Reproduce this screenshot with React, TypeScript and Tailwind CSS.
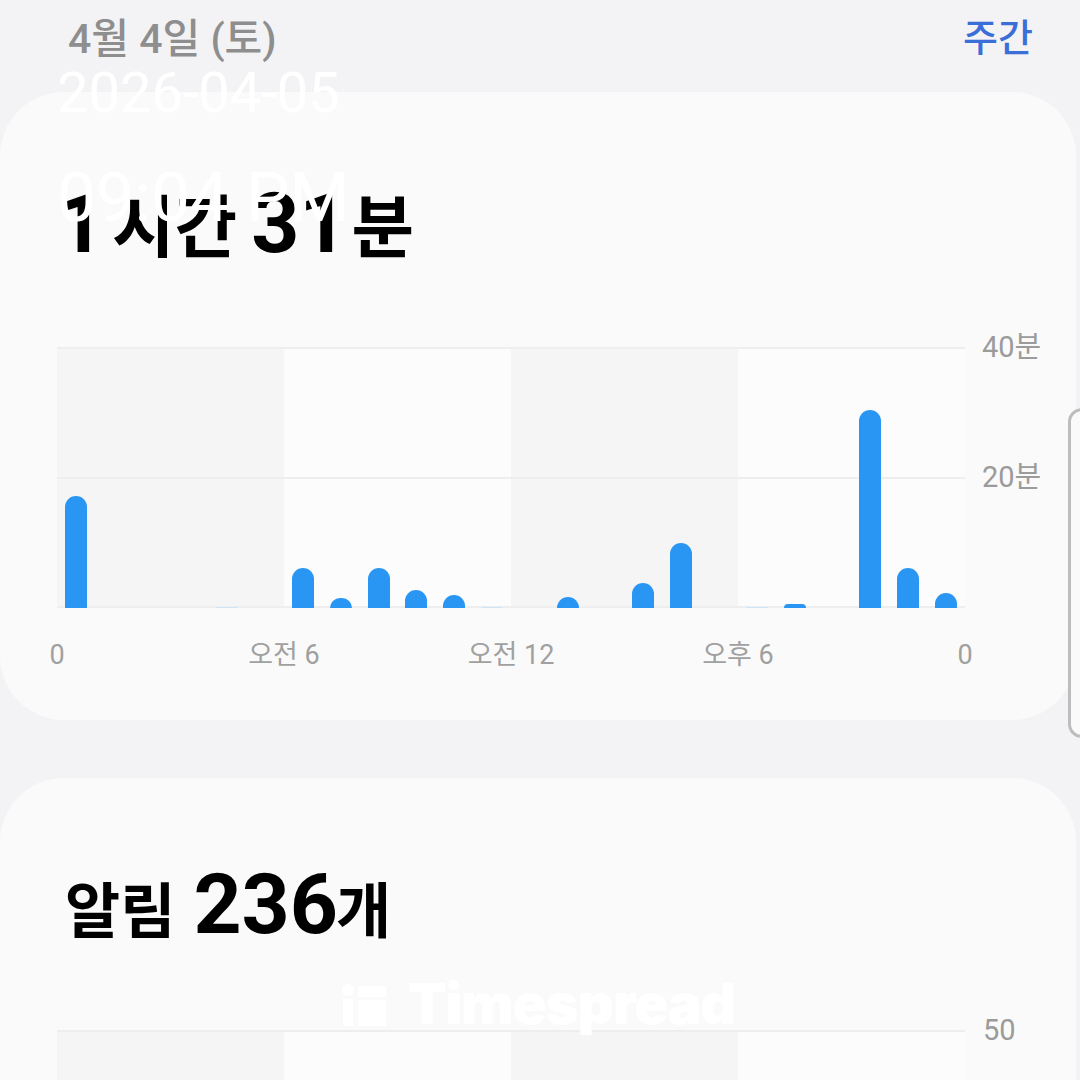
const usage = [112, 0, 0, 0, 1, 0, 40, 10, 40, 18, 13, 1, 0, 11, 0, 25, 65, 0, 1, 4, 0, 198, 40, 15];

const Columns = () => (
  <div className="absolute inset-0 grid grid-cols-4">
    <div className="bg-[#f5f5f6]" />
    <div className="bg-[#fcfcfc]" />
    <div className="bg-[#f5f5f6]" />
    <div className="bg-[#fcfcfc]" />
  </div>
);

const UsageChart = () => (
  <div className="flex">
    <div className="relative h-[261px] w-[908px]">
      <Columns />
      <div className="absolute left-0 right-0 top-0 h-[2px] bg-[#eeeeee]" />
      <div className="absolute left-0 right-0 top-[130px] h-[2px] bg-[#eeeeee]" />
      <div className="absolute bottom-0 left-0 right-0 h-[2px] bg-[#eeeeee]" />
      <div className="absolute inset-0 flex items-end">
        {usage.map((h, i) => (
          <div key={i} className="flex h-full flex-1 items-end justify-center">
            {h > 0 && (
              <div
                className={
                  h > 2
                    ? "w-[22px] rounded-t-full bg-[#2a96f4]"
                    : "w-[22px] rounded-t-full bg-[#cfe4f7]"
                }
                style={{ height: h }}
              />
            )}
          </div>
        ))}
      </div>
    </div>
    <div className="ml-[17px] flex flex-col text-[29px] leading-[28px] text-[#9b9b9b]">
      <span className="-mt-[14px]">40분</span>
      <span className="mt-[102px]">20분</span>
    </div>
  </div>
);

const XLabels = () => (
  <div className="relative mt-[33px] h-[28px] w-[908px] text-[27px] leading-[28px] text-[#a0a0a0]">
    <span className="absolute left-0 -translate-x-1/2">0</span>
    <span className="absolute left-[227px] -translate-x-1/2">오전 6</span>
    <span className="absolute left-[454px] -translate-x-1/2">오전 12</span>
    <span className="absolute left-[681px] -translate-x-1/2">오후 6</span>
    <span className="absolute left-[908px] -translate-x-1/2">0</span>
  </div>
);

const Timespread = () => (
  <div className="absolute left-[342px] top-[976px] flex items-center gap-[20px] text-white">
    <svg width="46" height="44" viewBox="0 0 46 44" fill="#ffffff">
      <circle cx="6" cy="8" r="6" />
      <rect x="1" y="17" width="10" height="29" />
      <rect x="16" y="4" width="28" height="11" />
      <rect x="16" y="18" width="28" height="28" />
    </svg>
    <span className="text-[56px] font-black leading-none tracking-[-1px] [font-family:Inter,sans-serif]">
      Timespread
    </span>
  </div>
);

export default function App() {
  return (
    <div className="relative h-[1080px] w-[1080px] overflow-hidden bg-[#f3f3f5] [font-family:Roboto,'Noto_Sans_CJK_KR',sans-serif]">
      <div className="flex h-[92px] items-start justify-between pl-[68px] pr-[47px] pt-[19px]">
        <span className="text-[41px] font-medium leading-none text-[#8e8e8e]">4월 4일 (토)</span>
        <span className="text-[38px] font-medium leading-none text-[#3b6fd8]">주간</span>
      </div>

      <div className="h-[628px] w-[1076px] rounded-[64px] bg-[#fafafa] pl-[57px]">
        <div className="flex h-[255px] items-baseline pt-[90px] font-bold leading-none text-black">
          <span className="text-[82px]">1</span>
          <span className="ml-[8px] text-[68px]">시간</span>
          <span className="ml-[14px] text-[84px]">31</span>
          <span className="ml-[4px] text-[68px]">분</span>
        </div>
        <UsageChart />
        <XLabels />
      </div>

      <div className="mt-[58px] h-[400px] w-[1076px] rounded-[64px] bg-[#fafafa] pl-[57px]">
        <div className="flex h-[252px] items-baseline pt-[85px] font-bold leading-none text-black">
          <span className="ml-[8px] text-[60px]">알림</span>
          <span className="ml-[18px] text-[84px]">236</span>
          <span className="-ml-[2px] text-[60px]">개</span>
        </div>
        <div className="flex">
          <div className="relative h-[200px] w-[908px]">
            <Columns />
            <div className="absolute left-0 right-0 top-0 h-[2px] bg-[#eeeeee]" />
          </div>
          <span className="-mt-[14px] ml-[18px] text-[29px] leading-[28px] text-[#9b9b9b]">50</span>
        </div>
      </div>

      <div className="absolute left-[1068px] top-[408px] h-[330px] w-[30px] rounded-[14px] border-[3px] border-[#bdbdbd] bg-[#fafafa]" />

      <div className="absolute left-[57px] top-[65px] text-white leading-none">
        <div className="text-[56px]">2026-04-05</div>
        <div className="mt-[42px] text-[69px]">09:04 PM</div>
      </div>

      <Timespread />
    </div>
  );
}
